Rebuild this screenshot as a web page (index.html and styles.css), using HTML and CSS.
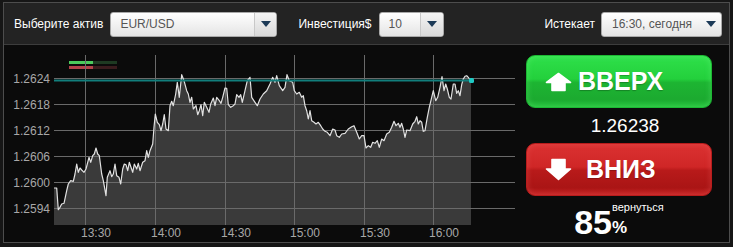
FILE: index.html
```html
<!DOCTYPE html>
<html lang="ru">
<head>
    <meta charset="UTF-8">
    <title>Опцион EUR/USD</title>
    <link rel="stylesheet" href="styles.css">
</head>
<body>
    <div class="widget">
        <div class="toolbar">
            <span class="label">Выберите актив</span>
            <div class="select asset">
                <span class="value">EUR/USD</span>
                <span class="arrow"><i></i></span>
            </div>
            <span class="label">Инвестиция$</span>
            <div class="select amount">
                <span class="value">10</span>
                <span class="arrow"><i></i></span>
            </div>
            <div class="expiry">
                <span class="label">Истекает</span>
                <div class="select time">
                    <span class="value">16:30, сегодня</span>
                    <span class="arrow plain"><i></i></span>
                </div>
            </div>
        </div>
        <div class="body">
            <svg class="chart" width="515" height="196" viewBox="4 46 515 196">
                <!-- legend -->
                <rect x="69" y="62" width="24" height="3" fill="#4cc95c"/>
                <rect x="93" y="62" width="24" height="3" fill="#1e3a22"/>
                <rect x="69" y="67" width="24" height="3" fill="#b3414a"/>
                <rect x="93" y="67" width="24" height="3" fill="#3a1c1e"/>

                <polygon class="area" points="54,189 56.7,189 58.3,210.7 60,208.3 61.7,205 64,204.3 66.7,191.7 68.3,185 70.7,181.7 73.3,182.3 75,175 76.7,165 78.3,173.3 80,169 81.7,171 84,173.3 86,170 87.3,165 89,158.3 90.7,163.3 92.7,156.7 94.3,155 96,149 97.7,155 99.3,156.7 101.7,175 103.3,181.7 106,196.7 107.3,178.3 110,171.7 111.7,177.7 113.3,175 115,165 116.7,176.7 119,178.3 120.7,185 122.7,170 124.3,165 126,165.7 127.7,171.7 129.3,163.3 131,168.3 132.7,173.3 134.3,165 136.7,170 138.3,164.3 140,171.7 142.7,163.3 145,161.7 146.7,151.7 148.3,158.3 150,151.7 152.7,145 154,128.3 155.3,115 157.3,123.3 159.3,125.7 161,131.7 162.7,125 164.3,115.7 166,130 168.3,131.7 170,106.7 171.7,102.3 173.3,106.7 175.7,95 177.3,83.3 179.3,98.3 181.7,75.7 184,81.7 186.7,91.7 188.3,95 190,103.3 191.7,98.3 193.3,110 196,106.7 197.7,115.7 199.3,111.7 201,105.7 202.7,116.7 204.3,103.3 206.7,108.3 209,113.3 210.7,105 213.3,99 215,106.7 216.7,98.3 219.3,101.7 221,104.3 222.7,98.3 225,89 226.7,89.3 228.3,105.7 230.7,108.3 233.3,106.7 235,105 236.7,95.7 239,98.3 240.7,95.7 242.3,103.3 245,91.7 247.3,81.7 250,78.3 251.7,98.3 255,103.3 257.3,106.7 260,100 263.3,95 266.7,91.7 270,85 272.7,78.3 275,83.3 276.7,76.7 279.3,86.7 282.7,91.7 285,88.3 287,75.7 289.3,81.7 292.7,83.3 294.3,91.7 296.7,95 299.3,93.3 301.7,98.3 303.3,96.7 305,106.7 306.7,111.7 308.3,120 310,111.7 311.7,121.7 314,123.3 316,125 318.3,123.3 320.7,126.7 322.7,130 325,132.3 327.3,133.3 330,136.7 332.7,130 335,131 336.7,136.7 339.3,138.3 341.7,135 345,134.3 348.3,130 351.7,127.7 354,126.7 356.7,133.3 359.3,140 361.7,136.7 364,136.7 366,149 368.3,146.7 370.7,148.3 372.7,143.3 375,144.3 377.3,141.7 379.3,148.3 381.7,140 384,141.7 386.7,135 389.3,133.3 391.7,128.3 394,122.3 396,126.7 398.3,124.3 400,128.3 401.7,124.3 403.3,130 405,138.3 406.7,131 410,131.7 412.7,125 415,122.3 416.7,117.7 418.3,125 420,121.7 421.7,123.3 423.3,132.3 425,131.7 427.3,118.3 429.3,108.3 431.7,98.3 433.3,91.7 435.7,101.7 437.7,98.3 440,88.3 442,77.7 444,91.7 445.7,85 447.3,90 449.3,98.3 451,100 453.3,85 455,85 456.7,94.3 458.3,91.7 460,96.7 461.7,85.7 463.3,80 465,77.3 466.7,76.7 468.3,78.3 470,81 471,81.5 471,226 54,226"/>

                <g class="grid">
                    <line x1="54" y1="79.5" x2="515" y2="79.5"/>
                    <line x1="54" y1="105.5" x2="515" y2="105.5"/>
                    <line x1="54" y1="131.5" x2="515" y2="131.5"/>
                    <line x1="54" y1="157.5" x2="515" y2="157.5"/>
                    <line x1="54" y1="183.5" x2="515" y2="183.5"/>
                    <line x1="54" y1="209.5" x2="515" y2="209.5"/>
                    <line x1="85.5" y1="56" x2="85.5" y2="226"/>
                    <line x1="155.5" y1="56" x2="155.5" y2="226"/>
                    <line x1="225.5" y1="56" x2="225.5" y2="226"/>
                    <line x1="294.5" y1="56" x2="294.5" y2="226"/>
                    <line x1="364.5" y1="56" x2="364.5" y2="226"/>
                    <line x1="433.5" y1="56" x2="433.5" y2="226"/>
                </g>

                <polyline class="price" points="54,189 56.7,189 58.3,210.7 60,208.3 61.7,205 64,204.3 66.7,191.7 68.3,185 70.7,181.7 73.3,182.3 75,175 76.7,165 78.3,173.3 80,169 81.7,171 84,173.3 86,170 87.3,165 89,158.3 90.7,163.3 92.7,156.7 94.3,155 96,149 97.7,155 99.3,156.7 101.7,175 103.3,181.7 106,196.7 107.3,178.3 110,171.7 111.7,177.7 113.3,175 115,165 116.7,176.7 119,178.3 120.7,185 122.7,170 124.3,165 126,165.7 127.7,171.7 129.3,163.3 131,168.3 132.7,173.3 134.3,165 136.7,170 138.3,164.3 140,171.7 142.7,163.3 145,161.7 146.7,151.7 148.3,158.3 150,151.7 152.7,145 154,128.3 155.3,115 157.3,123.3 159.3,125.7 161,131.7 162.7,125 164.3,115.7 166,130 168.3,131.7 170,106.7 171.7,102.3 173.3,106.7 175.7,95 177.3,83.3 179.3,98.3 181.7,75.7 184,81.7 186.7,91.7 188.3,95 190,103.3 191.7,98.3 193.3,110 196,106.7 197.7,115.7 199.3,111.7 201,105.7 202.7,116.7 204.3,103.3 206.7,108.3 209,113.3 210.7,105 213.3,99 215,106.7 216.7,98.3 219.3,101.7 221,104.3 222.7,98.3 225,89 226.7,89.3 228.3,105.7 230.7,108.3 233.3,106.7 235,105 236.7,95.7 239,98.3 240.7,95.7 242.3,103.3 245,91.7 247.3,81.7 250,78.3 251.7,98.3 255,103.3 257.3,106.7 260,100 263.3,95 266.7,91.7 270,85 272.7,78.3 275,83.3 276.7,76.7 279.3,86.7 282.7,91.7 285,88.3 287,75.7 289.3,81.7 292.7,83.3 294.3,91.7 296.7,95 299.3,93.3 301.7,98.3 303.3,96.7 305,106.7 306.7,111.7 308.3,120 310,111.7 311.7,121.7 314,123.3 316,125 318.3,123.3 320.7,126.7 322.7,130 325,132.3 327.3,133.3 330,136.7 332.7,130 335,131 336.7,136.7 339.3,138.3 341.7,135 345,134.3 348.3,130 351.7,127.7 354,126.7 356.7,133.3 359.3,140 361.7,136.7 364,136.7 366,149 368.3,146.7 370.7,148.3 372.7,143.3 375,144.3 377.3,141.7 379.3,148.3 381.7,140 384,141.7 386.7,135 389.3,133.3 391.7,128.3 394,122.3 396,126.7 398.3,124.3 400,128.3 401.7,124.3 403.3,130 405,138.3 406.7,131 410,131.7 412.7,125 415,122.3 416.7,117.7 418.3,125 420,121.7 421.7,123.3 423.3,132.3 425,131.7 427.3,118.3 429.3,108.3 431.7,98.3 433.3,91.7 435.7,101.7 437.7,98.3 440,88.3 442,77.7 444,91.7 445.7,85 447.3,90 449.3,98.3 451,100 453.3,85 455,85 456.7,94.3 458.3,91.7 460,96.7 461.7,85.7 463.3,80 465,77.3 466.7,76.7 468.3,78.3 470,81 471,81.5"/>

                <line class="open" x1="54" y1="81.5" x2="471" y2="81.5"/>
                <rect x="469" y="79" width="5" height="5" rx="1.5" fill="#1fc9c4"/>

                <g class="y-labels">
                    <text x="50" y="84">1.2624</text>
                    <text x="50" y="110">1.2618</text>
                    <text x="50" y="136">1.2612</text>
                    <text x="50" y="162">1.2606</text>
                    <text x="50" y="188">1.2600</text>
                    <text x="50" y="214">1.2594</text>
                </g>
                <g class="x-labels">
                    <text x="96" y="238">13:30</text>
                    <text x="166" y="238">14:00</text>
                    <text x="236" y="238">14:30</text>
                    <text x="305" y="238">15:00</text>
                    <text x="375" y="238">15:30</text>
                    <text x="444" y="238">16:00</text>
                </g>
            </svg>

            <div class="trade">
                <button class="btn up">
                    <svg width="27" height="20" viewBox="0 0 27 20"><path d="M13.5 1.5 L25.5 10.5 L20 10.5 L20 18.5 L7 18.5 L7 10.5 L1.5 10.5 Z" fill="#fff" stroke="#fff" stroke-width="1.6" stroke-linejoin="round"/></svg>
                    <span>ВВЕРХ</span>
                </button>
                <div class="quote">1.26238</div>
                <button class="btn down">
                    <svg width="27" height="23" viewBox="0 0 27 23"><path d="M7 1.5 L20 1.5 L20 11 L25.5 11 L13.5 21.5 L1.5 11 L7 11 Z" fill="#fff" stroke="#fff" stroke-width="1.6" stroke-linejoin="round"/></svg>
                    <span>ВНИЗ</span>
                </button>
                <div class="payout">
                    <span class="num">85</span>
                    <span class="side">
                        <span class="ret">вернуться</span>
                        <span class="pct">%</span>
                    </span>
                </div>
            </div>
        </div>
    </div>
</body>
</html>
```

FILE: styles.css
```css
body {
    margin: 0;
    background-color: #161616;
    font-family: "Liberation Sans", Arial, sans-serif;
}
.widget {
    box-sizing: border-box;
    width: 727px;
    height: 241px;
    margin: 2px 0 0 3px;
    border: 1px solid #4d4d4d;
    background-color: #0b0b0b;
}
.toolbar {
    display: flex;
    align-items: center;
    height: 42px;
    padding: 1px 7px 0 10px;
    box-sizing: border-box;
    background-color: #232323;
    border-bottom: 1px solid #3d3d3d;
}
.label {
    color: #fff;
    font-size: 12px;
    margin-right: 7px;
}
.select {
    display: flex;
    box-sizing: border-box;
    height: 25px;
    border: 1px solid #a9a9a9;
    border-radius: 3px;
    background: linear-gradient(#ffffff, #e4e4e4);
    color: #555;
    font-size: 12px;
}
.select .value {
    flex: 1;
    line-height: 23px;
    padding-left: 9px;
}
.select .arrow {
    display: flex;
    align-items: center;
    justify-content: center;
    width: 21px;
    border-left: 1px solid #c8c8c8;
    background: linear-gradient(#f4f4f4, #d9d9d9);
    border-radius: 0 2px 2px 0;
}
.select .arrow.plain {
    border-left: none;
    background: none;
}
.select .arrow i {
    width: 0;
    height: 0;
    border-left: 5px solid transparent;
    border-right: 5px solid transparent;
    border-top: 6px solid #1c3a57;
}
.asset {
    width: 167px;
    margin-right: 21px;
}
.amount {
    width: 65px;
}
.amount .arrow {
    width: 22px;
}
.expiry {
    display: flex;
    align-items: center;
    margin-left: auto;
}
.expiry .label {
    margin-right: 6px;
}
.time {
    width: 121px;
}
.time .value {
    padding-left: 10px;
}
.body {
    display: flex;
    height: 196px;
}
.chart {
    display: block;
    flex: none;
}
.chart .area {
    fill: #3a3a3a;
}
.chart .grid line {
    stroke: #6a6a6a;
    stroke-width: 1;
}
.chart .price {
    fill: none;
    stroke: #e2e2e2;
    stroke-width: 1.2;
    stroke-linejoin: round;
}
.chart .open {
    stroke: #127f7d;
    stroke-width: 2;
}
.chart text {
    font-family: "Liberation Sans", Arial, sans-serif;
    font-size: 12px;
    fill: #a8a8a8;
}
.chart .y-labels text {
    text-anchor: end;
}
.chart .x-labels text {
    text-anchor: middle;
}
.trade {
    width: 186px;
    margin-left: 7px;
    padding-top: 10px;
}
.btn {
    display: flex;
    align-items: center;
    box-sizing: border-box;
    width: 186px;
    height: 53px;
    padding: 0 0 0 18px;
    border-radius: 9px;
    color: #fff;
    font-family: "Liberation Sans", Arial, sans-serif;
    font-size: 25px;
    font-weight: bold;
    cursor: pointer;
    text-shadow: 0 1px 1px rgba(0, 0, 0, 0.25);
}
.btn svg {
    flex: none;
}
.up {
    border: 1px solid #1cb833;
    background: linear-gradient(#2fe04a 0%, #23d03c 45%, #1db532 52%, #1caa30 85%, #22c03a 100%);
    box-shadow: inset 0 0 6px rgba(120, 255, 140, 0.35);
}
.up span {
    margin-left: 6px;
}
.down {
    border: 1px solid #b81c1c;
    background: linear-gradient(#db3232 0%, #cf2626 45%, #b81a1a 52%, #aa1515 85%, #c42222 100%);
    box-shadow: inset 0 0 6px rgba(255, 120, 120, 0.3);
}
.down span {
    margin-left: 14px;
}
.quote {
    height: 35px;
    line-height: 35px;
    padding-left: 12px;
    color: #fff;
    font-size: 19px;
    text-align: center;
}
.payout {
    display: flex;
    justify-content: center;
    align-items: flex-end;
    margin-top: 6px;
    color: #fff;
}
.payout .num {
    font-size: 34px;
    font-weight: bold;
    line-height: 34px;
}
.payout .side {
    display: flex;
    flex-direction: column;
    margin-bottom: 3px;
}
.payout .ret {
    font-size: 11px;
    line-height: 11px;
    margin-bottom: 6px;
}
.payout .pct {
    font-size: 17px;
    font-weight: bold;
    line-height: 17px;
}
```
